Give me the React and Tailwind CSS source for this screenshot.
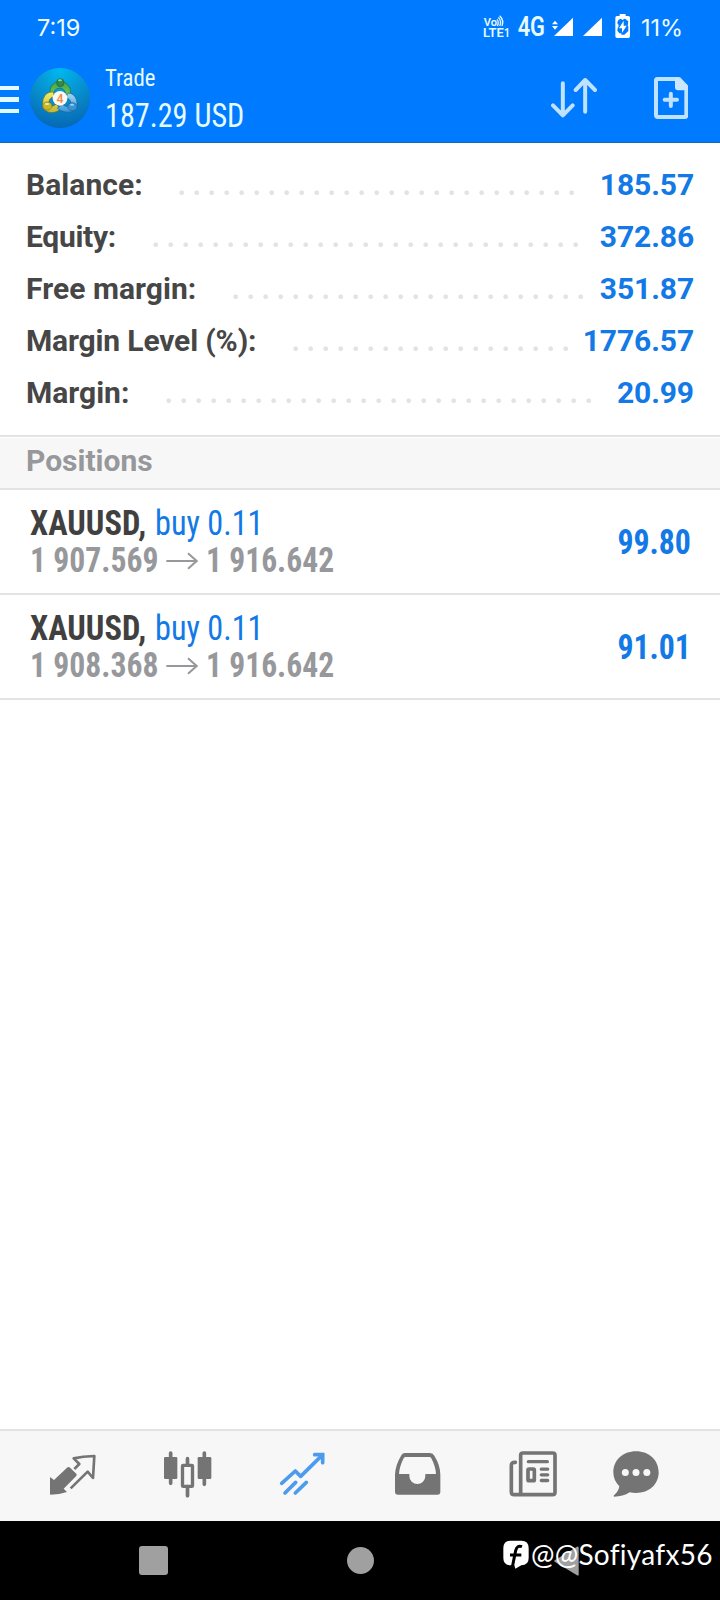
const CONDENSED = "font-['Roboto_Condensed',Roboto,sans-serif] [font-stretch:75%] whitespace-nowrap";

const SUMMARY = [
  { label: "Balance:", value: "185.57", labelW: "w-[148px]", dotsW: "w-[405px]", tracking: "tracking-[0.05px]" },
  { label: "Equity:", value: "372.86", labelW: "w-[122px]", dotsW: "w-[435px]", tracking: "tracking-[-0.3px]" },
  { label: "Free margin:", value: "351.87", labelW: "w-[202px]", dotsW: "w-[360px]", tracking: "tracking-[0.05px]" },
  { label: "Margin Level (%):", value: "1776.57", labelW: "w-[262px]", dotsW: "w-[285px]", tracking: "tracking-[-0.15px]" },
  { label: "Margin:", value: "20.99", labelW: "w-[135px]", dotsW: "w-[435px]", tracking: "tracking-[0px]" },
];

const POSITIONS = [
  { symbol: "XAUUSD,", side: "buy 0.11", open: "1 907.569", current: "1 916.642", profit: "99.80" },
  { symbol: "XAUUSD,", side: "buy 0.11", open: "1 908.368", current: "1 916.642", profit: "91.01" },
];

function StatusBar() {
  return (
    <div className="flex h-14 items-center pl-[37px] font-[Inter,sans-serif] text-[#effcff]">
      <span className="w-[446px] text-[23.500px] leading-none">7:19</span>
      <svg className="h-14 w-[164px] shrink-0" viewBox="69 0 492 168" fill="#e6fbff">
        <g fontFamily="Roboto, sans-serif" fontWeight="600">
          <text x="71" y="78" fontSize="32" textLength="40" lengthAdjust="spacingAndGlyphs">Vo</text>
          <text x="69" y="111" fontSize="36" textLength="62" lengthAdjust="spacingAndGlyphs">LTE</text>
          <text x="132" y="111" fontSize="36" textLength="18" lengthAdjust="spacingAndGlyphs">1</text>
        </g>
        <path d="M111 58q7 9 1 20M115 52q11 12 4 26M119 47q14 14 7 31" fill="none" stroke="#e6fbff" strokeWidth="4" />
        <text x="173" y="108" fontSize="82" fontFamily="Roboto, sans-serif" fontWeight="600" textLength="82" lengthAdjust="spacingAndGlyphs">4G</text>
        <g fill="#fff">
          <path d="M276 73l9-11 9 11zM276 78h18l-9 11z" />
          <path d="M282 108L339 53V108z" />
          <path d="M369 108L426 53V108z" />
          <path fillRule="evenodd" d="M479 42h18v6h8q5 0 5 5v56q0 5-5 5h-34q-5 0-5-5V53q0-5 5-5h8zM476 59q-4 4-4 11 4 3 4 9-5 6-4 13l6 8h6v4h9l12-11v-13q-3-3-1-8l1-9-5-2q0-5-7-5l-5 4-6-4z" />
          <path d="M491 62L477 85h9v14l14-22h-9z" />
        </g>
      </svg>
      <span className="ml-[-6px] text-[23.500px] leading-none">11%</span>
    </div>
  );
}

function AccountLogo() {
  return (
    <svg className="mb-[3px] h-[60px] w-[60px] shrink-0" viewBox="30 24 180 180">
      <defs>
        <radialGradient id="disc" cx="50%" cy="5%" r="95%">
          <stop offset="0" stopColor="#00b8ee" />
          <stop offset=".5" stopColor="#078fce" />
          <stop offset="1" stopColor="#0668b4" />
        </radialGradient>
        <linearGradient id="green" x2="0" y2="1"><stop stopColor="#3fa052" /><stop offset="1" stopColor="#74cf57" /></linearGradient>
        <linearGradient id="gold" x2="0" y2="1"><stop stopColor="#f0ed68" /><stop offset="1" stopColor="#c4b733" /></linearGradient>
        <linearGradient id="sky" x2="0" y2="1"><stop stopColor="#a3d8f2" /><stop offset="1" stopColor="#3a97d8" /></linearGradient>
      </defs>
      <circle cx="120" cy="114" r="90" fill="url(#disc)" />
      <g strokeWidth="2">
        <path d="M90 101Q88 67 119 64Q154 67 152 104L139 110Q137 86 120 84Q103 86 101 98z" fill="url(#green)" stroke="#1c6b3d" />
        <path d="M100 96Q76 94 69 119Q63 149 84 156Q104 162 121 148L109 132Q99 143 86 137Q84 112 103 110z" fill="url(#gold)" stroke="#77701e" />
        <path d="M144 99Q162 99 170 120Q176 148 155 155Q132 161 112 145L127 132Q140 145 154 136Q154 116 137 113z" fill="url(#sky)" stroke="#175d98" />
        <ellipse cx="121" cy="68" rx="11" ry="12" fill="#2f8a4b" stroke="#1b6537" />
        <ellipse cx="82" cy="138" rx="14" ry="12" fill="#c9b72b" stroke="#827a20" />
        <ellipse cx="157" cy="140" rx="14" ry="12" fill="#3d92d2" stroke="#1c619b" />
      </g>
      <ellipse cx="120" cy="61" rx="6" ry="3" fill="#9fd0a0" />
      <ellipse cx="81" cy="132" rx="7" ry="3" fill="#f1ea9b" />
      <ellipse cx="156" cy="134" rx="6" ry="3" fill="#9fd3f2" />
      <circle cx="120" cy="115" r="22" fill="#fcf8f6" />
      <text x="120" y="128" textAnchor="middle" fontFamily="Roboto, sans-serif" fontSize="37" fontWeight="500" fill="#f28b45">4</text>
    </svg>
  );
}

function Header() {
  return (
    <header className="bg-[#007aff]">
      <StatusBar />
      <div className="flex h-[87px] items-center border-b border-[#1168bd]">
        <button className="mr-[11px] flex w-[19px] shrink-0 flex-col gap-[7px]" aria-label="Menu">
          <span className="h-[4px] bg-[#e2faff]" />
          <span className="h-[5px] bg-[#e2faff]" />
          <span className="h-[4px] bg-[#e2faff]" />
        </button>
        <AccountLogo />
        <div className={`mb-[5px] ml-[15px] w-[446px] text-[#e6fbff] ${CONDENSED}`}>
          <div className="origin-left scale-x-[0.95] text-[24px] leading-[38px]">Trade</div>
          <div className="origin-left scale-x-[0.915] text-[33px] leading-[37px]">187.29 USD</div>
        </div>
        <svg className="mb-[2px] h-[42px] w-[46px] shrink-0" viewBox="273 231 138 126" fill="none" stroke="#bfe2ff" strokeWidth="12" strokeLinecap="round" strokeLinejoin="round">
          <path d="M308.500 250V346M279 316l29.500 30 29.500-30M375.500 335V240M347 270l28.500-30 29.500 30" />
        </svg>
        <svg className="mb-[2px] ml-[57px] h-[42px] w-[34px] shrink-0" viewBox="582 231 102 126">
          <path d="M592 237H657L679 260V346Q679 351 673 351H594Q588 351 588 345V242Q588 237 592 237z" fill="none" stroke="#bfe2ff" strokeWidth="12" strokeLinejoin="round" />
          <path d="M645 235V262Q645 271 654 271H682V258L659 235z" fill="#cbe7ff" />
          <path d="M632.500 281V318M614 299.500H651" stroke="#bfe2ff" strokeWidth="12" strokeLinecap="round" />
        </svg>
      </div>
    </header>
  );
}

function Summary() {
  return (
    <section className="border-b-2 border-[#e3e3e3] pt-[16px] pb-[16px] pl-[26px] pr-[26px] font-[Roboto,sans-serif] text-[30px] font-bold">
      {SUMMARY.map((row) => (
        <div key={row.label} className="flex h-[52px] items-center whitespace-nowrap leading-[52px]">
          <span className={`shrink-0 text-[#464646] ${row.tracking} ${row.labelW}`}>{row.label}</span>
          <span className={`mt-[16px] h-[6px] shrink-0 bg-[radial-gradient(circle_at_7.7px_2.7px,#e3e3e3_1.9px,transparent_2.8px)] bg-[length:15px_6px] ${row.dotsW}`} />
          <span className="flex-1 text-right tracking-[-0.1px] text-[#1279e6]">{row.value}</span>
        </div>
      ))}
    </section>
  );
}

function PositionRow({ item }) {
  return (
    <div className={`flex h-[105px] items-center justify-between border-b-2 border-[#e3e3e3] pt-[1px] pl-[30px] pr-[29px] text-[35px] leading-[37px] ${CONDENSED}`}>
      <div>
        <div className="flex">
          <span className="w-[125px] origin-left scale-x-[0.928] font-bold text-[#404040]">{item.symbol}</span>
          <span className="origin-left scale-x-[0.92] text-[#1279e6]">{item.side}</span>
        </div>
        <div className="flex items-center font-bold text-[#97989b]">
          <span className="w-[136px] origin-left scale-x-[0.905]">{item.open}</span>
          <svg className="mr-[8px] h-[18px] w-[32px]" viewBox="0 0 96 54" fill="none" stroke="#97989b" strokeWidth="6">
            <path d="M1 27H92M66 4L92 27L66 50" />
          </svg>
          <span className="origin-left scale-x-[0.902]">{item.current}</span>
        </div>
      </div>
      <span className="origin-right scale-x-[0.908] font-bold text-[#1279e6]">{item.profit}</span>
    </div>
  );
}

function TabBar() {
  const tab = "flex w-[115px] shrink-0 justify-center";
  const icon = "h-[90px] w-[60px]";
  return (
    <nav className="flex h-[92px] border-t-2 border-[#e3e3e3] bg-[#f7f7f7] pl-[14px]">
      <button className={tab} aria-label="Quotes">
        <svg className={icon} viewBox="36 33 180 270">
          <path d="M60 171L72 180 111 143Q116 139 121 144L139 161Q142 165 138 169L101 206 111 216Q88 224 62 224Q60 224 60 221z" fill="#747474" />
          <path d="M133 147L148 132 131 115Q158 109 193 108L189 174 173 155 122 205" fill="none" stroke="#747474" strokeWidth="8" strokeLinejoin="round" />
        </svg>
      </button>
      <button className={tab} aria-label="Charts">
        <svg className={icon} viewBox="381 33 180 270" fill="#747474">
          <path d="M422 99V190M523 99V193M472.500 116V135M472.500 200V227" stroke="#747474" strokeWidth="11" strokeLinecap="round" />
          <rect x="402" y="111" width="40" height="66" rx="4" />
          <rect x="503" y="111" width="41" height="66" rx="4" />
          <rect x="457.500" y="136" width="30" height="63" rx="2" fill="none" stroke="#747474" strokeWidth="10" />
        </svg>
      </button>
      <button className={tab} aria-label="Trade">
        <svg className={icon} viewBox="36 33 180 270" fill="none" stroke="#4c9bed" strokeWidth="11" strokeLinecap="round">
          <path d="M65 190L106 153 122 169 183 109M75 219L107 187M106 219L139 187" strokeLinejoin="round" />
          <path d="M164 104H188V128" />
          <path d="M172 102H191V121z" fill="#4c9bed" stroke="none" />
        </svg>
      </button>
      <button className={tab} aria-label="History">
        <svg className={icon} viewBox="381 33 180 270" fill="#747474">
          <path fillRule="evenodd" d="M435 99H510Q519 99 523 107Q541 136 541 164V215Q541 224 532 224H414Q405 224 405 215V164Q406 136 424 106Q428 99 435 99zM437 111Q433 111 431 115Q418 140 417 162H448V168A24 24 0 0 0 496 168V162H528Q527 140 514 115Q512 111 508 111z" />
        </svg>
      </button>
      <button className={tab} aria-label="News">
        <svg className={icon} viewBox="36 33 180 270" fill="none" stroke="#747474" strokeWidth="11" strokeLinecap="round">
          <path d="M76 127Q64 126 64 136V215Q64 224 73 224H188Q195 224 195 217V106Q195 99 188 99H99Q92 99 92 106V222" />
          <path d="M115 125H172M154 147.500H173M154 164.500H173M154 181.500H173" strokeWidth="10" />
          <rect x="114" y="147" width="19" height="35" rx="3" strokeWidth="11" />
        </svg>
      </button>
      <button className="flex w-[92px] shrink-0 justify-center" aria-label="Messages">
        <svg className={icon} viewBox="345 33 180 270">
          <path d="M438 94C478 94 506 121 506 157C506 193 478 219 438 219Q428 219 419 217Q399 230 372 230Q370 229 372 226Q386 214 388 199Q370 181 370 157C370 121 398 94 438 94z" fill="#747474" />
          <g fill="#f7f7f7"><circle cx="406" cy="157.500" r="10.500" /><circle cx="438" cy="157.500" r="10.500" /><circle cx="470.500" cy="157.500" r="10.500" /></g>
        </svg>
      </button>
    </nav>
  );
}

function SystemBar() {
  return (
    <div className="relative flex h-[79px] items-center bg-black pl-[139px]">
      <span className="h-[29px] w-[29px] rounded-[3px] bg-[#a0a0a0]" />
      <span className="ml-[179px] h-[27px] w-[27px] rounded-full bg-[#a0a0a0]" />
      <svg className="ml-[178px] h-[32px] w-[28px]" viewBox="0 0 84 96">
        <path d="M8 46L75 5Q80 3 80 8V89Q80 93 75 91L8 50Q5 48 8 46z" fill="#a0a0a0" />
      </svg>
      <div className="absolute top-[15px] left-[503px] flex items-center text-white">
        <svg className="mt-[1px] h-[29px] w-[26px]" viewBox="69 96 78 87">
          <path d="M92 98H124Q146 98 146 120V150Q146 172 124 172L106 182 103 172H92Q70 172 70 150V120Q70 98 92 98z" fill="#fff" />
          <path d="M126 116Q111 110 107 128L97 177M90 141H124" fill="none" stroke="#000" strokeWidth="9" />
        </svg>
        <span className="ml-[2px] font-[Lato,sans-serif] text-[28px] leading-[36px] tracking-[0.3px] [font-variant-ligatures:none]">@@Sofiyafx56</span>
      </div>
    </div>
  );
}

export default function App() {
  return (
    <div className="flex h-[1600px] w-[720px] flex-col overflow-hidden bg-white">
      <Header />
      <main className="flex-1">
        <Summary />
        <h2 className="mt-[1px] h-[52px] border-b-2 border-[#e3e3e3] bg-[#f7f7f7] pl-[26px] font-[Roboto,sans-serif] text-[30px] font-bold leading-[45px] text-[#97989b]">Positions</h2>
        {POSITIONS.map((item) => (
          <PositionRow key={item.open} item={item} />
        ))}
      </main>
      <TabBar />
      <SystemBar />
    </div>
  );
}
